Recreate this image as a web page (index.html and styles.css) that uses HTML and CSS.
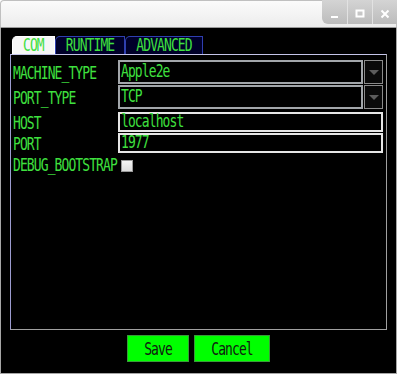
FILE: index.html
```html
<!DOCTYPE html>
<html lang="en">
<head>
  <meta charset="UTF-8">
  <meta name="viewport" content="width=device-width, initial-scale=1.0">
  <title>Settings</title>
  <link rel="stylesheet" href="styles.css">
</head>
<body>

  <div class="window">
    <div class="titlebar">
      <div class="wmButtons">
        <div class="wmButton">
          <svg width="10" height="10" viewBox="0 0 10 10"><rect x="1" y="7" width="7" height="2" fill="#fff"/></svg>
        </div>
        <div class="wmButton">
          <svg width="10" height="10" viewBox="0 0 10 10"><rect x="1.5" y="1.5" width="7" height="6" fill="none" stroke="#fff" stroke-width="2"/></svg>
        </div>
        <div class="wmButton">
          <svg width="10" height="10" viewBox="0 0 10 10"><path d="M1.5 1.5 L8.5 8.5 M8.5 1.5 L1.5 8.5" stroke="#fff" stroke-width="2"/></svg>
        </div>
      </div>
    </div>

    <div class="content">
      <div class="tabs">
        <div class="tab selected"><span class="txt">COM</span></div>
        <div class="tab"><span class="txt">RUNTIME</span></div>
        <div class="tab"><span class="txt">ADVANCED</span></div>
      </div>

      <div class="panel">
        <div class="row comboRow">
          <div class="label"><span class="txt">MACHINE_TYPE</span></div>
          <div class="combo">
            <div class="comboValue"><span class="txt">Apple2e</span></div>
            <div class="comboArrow"><span class="triangle"></span></div>
          </div>
        </div>
        <div class="row comboRow">
          <div class="label"><span class="txt">PORT_TYPE</span></div>
          <div class="combo">
            <div class="comboValue"><span class="txt">TCP</span></div>
            <div class="comboArrow"><span class="triangle"></span></div>
          </div>
        </div>
        <div class="row textRow first">
          <div class="label"><span class="txt">HOST</span></div>
          <div class="textField"><span class="txt">localhost</span></div>
        </div>
        <div class="row textRow">
          <div class="label"><span class="txt">PORT</span></div>
          <div class="textField"><span class="txt">1977</span></div>
        </div>
        <div class="row checkRow">
          <div class="label"><span class="txt">DEBUG_BOOTSTRAP</span></div>
          <div class="checkbox"></div>
        </div>
      </div>

      <div class="actions">
        <div class="button save"><span class="txt">Save</span></div>
        <div class="button cancel"><span class="txt">Cancel</span></div>
      </div>
    </div>
  </div>

</body>
</html>
```

FILE: styles.css
```css
body {
  margin: 0;
  background-color: #fff;
  font-family: "DejaVu Sans Mono", "Liberation Mono", monospace;
}

/* tall, narrow terminal look */
.txt {
  display: inline-block;
  transform: scaleY(1.35);
}

.window {
  width: 397px;
  height: 374px;
  display: flex;
  flex-direction: column;
}

.titlebar {
  height: 28px;
  box-sizing: border-box;
  border: 1px solid #c0c0c0;
  border-bottom: 1px solid #9a9a9a;
  border-radius: 4px 4px 0 0;
  background: linear-gradient(#fbfbfb, #ececec);
  display: flex;
  justify-content: flex-end;
}

.wmButtons {
  display: flex;
  height: 24px;
  margin-top: -1px;
  margin-right: -1px;
  border-radius: 0 0 0 6px;
  overflow: hidden;
  background: linear-gradient(#d4d4d4, #bcbcbc);
}

.wmButton {
  width: 25px;
  display: flex;
  align-items: center;
  justify-content: center;
  padding-top: 3px;
  box-sizing: border-box;
  border-left: 1px solid #e2e2e2;
}

.wmButton:first-child {
  border-left: none;
}

.content {
  flex: 1;
  background-color: #000;
  border: 1px solid #a6a6a6;
  border-top: none;
  padding: 8px 0 0 9px;
  display: flex;
  flex-direction: column;
}

.tabs {
  display: flex;
  margin-left: 2px;
  height: 18px;
}

.tab {
  color: #3fe03f;
  font-size: 13px;
  letter-spacing: -0.9px;
  line-height: 18px;
  padding: 0 10px;
  background-color: #00002a;
  border: 1px solid #2f3fb0;
  border-bottom: none;
  border-radius: 5px 0 0 0;
}

.tab.selected {
  background-color: #f6f6f6;
  border-color: #ffffff;
}

.panel {
  width: 377px;
  height: 276px;
  box-sizing: border-box;
  border: 1px solid #a0a0a0;
  border-top-color: #c4c4e8;
  border-left-color: #9c9cd0;
  padding: 5px 3px 0 1px;
  display: flex;
  flex-direction: column;
}

.row {
  display: flex;
  align-items: center;
}

.label {
  width: 105px;
  flex-shrink: 0;
  color: #3fe03f;
  font-size: 13px;
  letter-spacing: -0.9px;
  padding-left: 1px;
}

.comboRow {
  height: 24px;
  margin-bottom: 1px;
}

.combo {
  flex: 1;
  height: 24px;
  display: flex;
  gap: 1px;
}

.comboValue {
  flex: 1;
  border: 2px solid #a2a6aa;
  color: #3fe03f;
  font-size: 13px;
  letter-spacing: -0.9px;
  line-height: 20px;
  padding-left: 1px;
}

.comboArrow {
  width: 19px;
  box-sizing: border-box;
  border: 1px solid #8a8a8a;
  background-color: #0a0a0a;
  display: flex;
  align-items: center;
  justify-content: center;
}

.triangle {
  width: 0;
  height: 0;
  border-left: 5px solid transparent;
  border-right: 5px solid transparent;
  border-top: 5px solid #5c5c5c;
}

.textRow {
  height: 20px;
  margin-bottom: 1px;
}

.textRow.first {
  margin-top: 2px;
}

.textField {
  flex: 1;
  height: 20px;
  box-sizing: border-box;
  border: 2px solid #e6e6e6;
  color: #3fe03f;
  font-size: 13px;
  letter-spacing: -0.9px;
  line-height: 16px;
  padding-left: 1px;
}

.checkRow {
  margin-top: 1px;
  height: 18px;
}

.checkRow .label {
  width: auto;
  margin-right: 4px;
}

.checkbox {
  width: 12px;
  height: 12px;
  box-sizing: border-box;
  border: 1px solid #9a9a9a;
  background: linear-gradient(#f4f4f4, #dcdcdc);
  margin-top: 4px;
}

.actions {
  display: flex;
  justify-content: center;
  gap: 5px;
  margin-top: 5px;
  margin-left: -9px;
}

.button {
  height: 27px;
  box-sizing: border-box;
  background-color: #00ff00;
  border: 1px solid #3a9a3a;
  color: #102010;
  font-size: 13px;
  letter-spacing: -0.9px;
  line-height: 25px;
  text-align: center;
}

.save {
  width: 62px;
}

.cancel {
  width: 76px;
}
```
